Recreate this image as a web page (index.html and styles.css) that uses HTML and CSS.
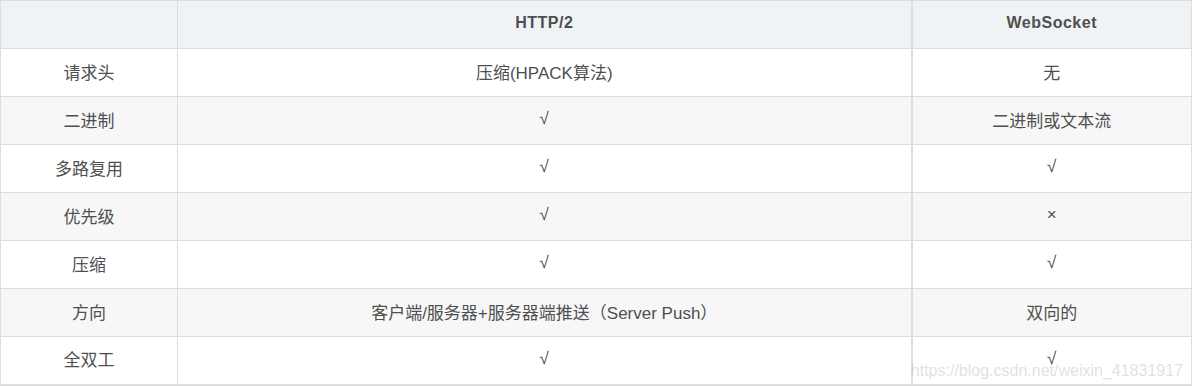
FILE: index.html
```html
<!DOCTYPE html>
<html lang="zh-CN">
<head>
  <meta charset="UTF-8" />
  <meta name="viewport" content="width=device-width, initial-scale=1.0"/>
  <title>HTTP/2 vs WebSocket</title>
  <link rel="stylesheet" href="styles.css">
</head>
<body>
  <div class="wrap">
    <table class="compare">
      <thead>
        <tr>
          <th class="col-name"></th>
          <th class="col-http">HTTP/2</th>
          <th class="col-ws">WebSocket</th>
        </tr>
      </thead>
      <tbody>
        <tr><td>请求头</td><td>压缩(HPACK算法)</td><td class="col-ws">无</td></tr>
        <tr><td>二进制</td><td>√</td><td class="col-ws">二进制或文本流</td></tr>
        <tr><td>多路复用</td><td>√</td><td class="col-ws">√</td></tr>
        <tr><td>优先级</td><td>√</td><td class="col-ws">×</td></tr>
        <tr><td>压缩</td><td>√</td><td class="col-ws">√</td></tr>
        <tr><td>方向</td><td>客户端/服务器+服务器端推送（Server Push）</td><td class="col-ws">双向的</td></tr>
        <tr><td>全双工</td><td>√</td><td class="col-ws">√</td></tr>
      </tbody>
    </table>
    <div class="watermark">https://blog.csdn.net/weixin_41831917</div>
  </div>
</body>
</html>
```

FILE: styles.css
```css
body {
  margin: 0;
  font-family: "Liberation Sans", "Noto Sans CJK SC", sans-serif;
  background: #fff;
  color: #4f4f4f;
}

.wrap {
  position: relative;
  width: 1192px;
}

.compare {
  width: 1192px;
  border-collapse: collapse;
  table-layout: fixed;
  font-size: 17px;
}

.compare th,
.compare td {
  border: 1px solid #ddd;
  height: 48px;
  padding: 0 8px 3px;
  text-align: center;
  vertical-align: middle;
  box-sizing: border-box;
}

.compare th {
  background: #eff3f5;
  font-size: 16px;
  font-weight: bold;
  letter-spacing: 0.5px;
}

.col-name {
  width: 177px;
}

.col-ws {
  width: 280px;
  border-left: 2px solid #ddd !important;
}

.compare tbody tr:nth-child(even) td {
  background: #f7f7f7;
}

.compare tbody tr:last-child td {
  border-bottom: 2px solid #ddd;
}

.watermark {
  position: absolute;
  right: 9px;
  bottom: 6px;
  font-size: 16px;
  color: rgba(200, 200, 200, 0.55);
  pointer-events: none;
}
```
